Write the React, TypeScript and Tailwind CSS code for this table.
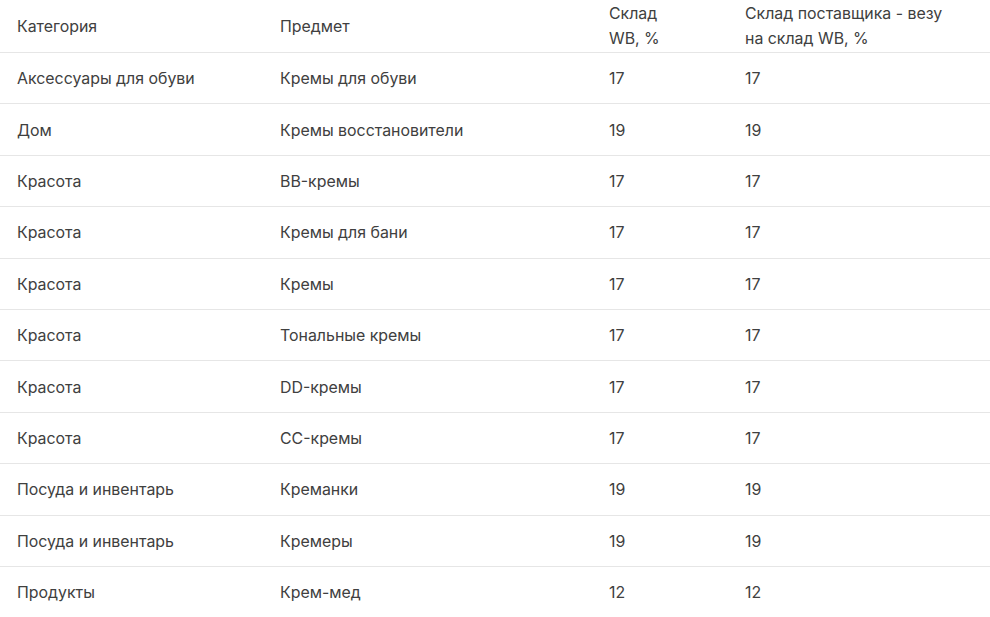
import React from "react";

const rows: [string, string, string, string][] = [
  ["Аксессуары для обуви", "Кремы для обуви", "17", "17"],
  ["Дом", "Кремы восстановители", "19", "19"],
  ["Красота", "BB-кремы", "17", "17"],
  ["Красота", "Кремы для бани", "17", "17"],
  ["Красота", "Кремы", "17", "17"],
  ["Красота", "Тональные кремы", "17", "17"],
  ["Красота", "DD-кремы", "17", "17"],
  ["Красота", "CC-кремы", "17", "17"],
  ["Посуда и инвентарь", "Креманки", "19", "19"],
  ["Посуда и инвентарь", "Кремеры", "19", "19"],
  ["Продукты", "Крем-мед", "12", "12"],
];

const cols = "grid grid-cols-[263px_329px_136px_1fr]";

export default function App() {
  return (
    <div
      className="w-[990px] h-[617px] overflow-hidden bg-white text-[#404040] text-[15.9px] leading-[25px]"
      style={{ fontFamily: "Inter, 'Noto Sans', sans-serif" }}
    >
      <div className={`${cols} h-[53px] items-center border-b border-[#e6e6e6]`}>
        <div className="pl-[17px]">Категория</div>
        <div className="pl-[17px]">Предмет</div>
        <div className="pl-[17px]">
          Склад
          <br />
          WB, %
        </div>
        <div className="pl-[17px]">
          Склад поставщика - везу
          <br />
          на склад WB, %
        </div>
      </div>
      {rows.map((r, i) => (
        <div
          key={i}
          className={`${cols} h-[51.4px] items-center border-b border-[#e6e6e6] pt-[1px]`}
        >
          {r.map((c, j) => (
            <div key={j} className="pl-[17px]">
              {c}
            </div>
          ))}
        </div>
      ))}
    </div>
  );
}
